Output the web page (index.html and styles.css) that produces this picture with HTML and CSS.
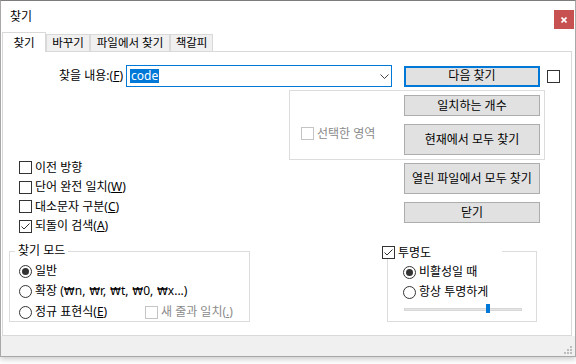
FILE: index.html
```html
<!DOCTYPE html>
<html lang="ko">
<head>
<meta charset="utf-8">
<title>찾기</title>
<link rel="stylesheet" href="styles.css">
</head>
<body>
<div class="window">
  <div class="titlebar">
    <span class="title">찾기</span>
    <span class="close"><svg width="6" height="6" viewBox="0 0 6 6"><path d="M0.5 0.5L5.5 5.5M5.5 0.5L0.5 5.5" stroke="#fff" stroke-width="1.6" fill="none"/></svg></span>
  </div>
  <div class="tabs">
    <div class="tab active w44">찾기</div>
    <div class="tab w44">바꾸기</div>
    <div class="tab w80">파일에서 찾기</div>
    <div class="tab w43">책갈피</div>
  </div>
  <div class="panel">
    <div class="find-row">
      <span class="find-label">찾을 내용:(<u>F</u>)</span>
      <div class="combo">
        <span class="sel">code</span>
        <svg class="chev" width="9" height="5" viewBox="0 0 9 5"><path d="M0.5 0.5L4.5 4.5L8.5 0.5" stroke="#444" fill="none"/></svg>
      </div>
      <span class="btn default">다음 찾기</span>
      <span class="cb find-cb"></span>
    </div>
    <div class="body">
      <div class="left">
        <div class="options">
          <div class="opt"><span class="cb"></span><span>이전 방향</span></div>
          <div class="opt"><span class="cb"></span><span>단어 완전 일치(<u>W</u>)</span></div>
          <div class="opt"><span class="cb"></span><span>대소문자 구분(<u>C</u>)</span></div>
          <div class="opt"><span class="cb checked"><svg width="11" height="11" viewBox="0 0 11 11"><path d="M1.5 5.5L4 8L9.5 2.5" stroke="#333" fill="none"/></svg></span><span>되돌이 검색(<u>A</u>)</span></div>
        </div>
        <div class="group mode">
          <div class="legend">찾기 모드</div>
          <div class="ropt"><span class="rb on"></span><span>일반</span></div>
          <div class="ropt"><span class="rb"></span><span>확장 <span class="esc">(<span class="won">₩</span>n, <span class="won">₩</span>r, <span class="won">₩</span>t, <span class="won">₩</span>0, <span class="won">₩</span>x...)</span></span></div>
          <div class="ropt">
            <span class="ritem"><span class="rb"></span><span>정규 표현식(<u>E</u>)</span></span>
            <span class="ritem dis"><span class="cb"></span><span>새 줄과 일치(<u>.</u>)</span></span>
          </div>
        </div>
      </div>
      <div class="right">
        <div class="sel-group">
          <div class="opt sel-opt dis"><span class="cb"></span><span>선택한 영역</span></div>
          <div class="btn-stack">
            <span class="btn">일치하는 개수</span>
            <span class="btn tall">현재에서 모두 찾기</span>
          </div>
        </div>
        <div class="btn-stack outer">
          <span class="btn tall">열린 파일에서 모두 찾기</span>
          <span class="btn">닫기</span>
        </div>
        <div class="group trans">
          <div class="legend cblegend"><span class="cb checked"><svg width="11" height="11" viewBox="0 0 11 11"><path d="M1.5 5.5L4 8L9.5 2.5" stroke="#333" fill="none"/></svg></span><span>투명도</span></div>
          <div class="ropt"><span class="rb on"></span><span>비활성일 때</span></div>
          <div class="ropt"><span class="rb"></span><span>항상 투명하게</span></div>
          <div class="slider"><span class="track"></span><span class="thumb"></span></div>
        </div>
      </div>
    </div>
  </div>
  <div class="footer">
    <svg width="10" height="9" viewBox="0 0 10 9"><g fill="#bdbdbd"><rect x="6" y="0" width="2" height="2"/><rect x="3" y="3" width="2" height="2"/><rect x="6" y="3" width="2" height="2"/><rect x="0" y="6" width="2" height="2"/><rect x="3" y="6" width="2" height="2"/><rect x="6" y="6" width="2" height="2"/></g></svg>
  </div>
</div>
</body>
</html>
```

FILE: styles.css
```css
* { box-sizing: border-box; margin: 0; padding: 0; }
html, body { width: 576px; height: 364px; overflow: hidden; background: #fff; }
body {
  font-family: "Noto Sans", "Noto Sans CJK KR", sans-serif;
  font-size: 12px;
  line-height: 14px;
  color: #000;
}
u { text-decoration: underline; text-underline-offset: 1px; }
.esc { word-spacing: 0.5px; }
.won {
  display: inline-block;
  width: 11px;
  text-align: center;
  font-family: "DejaVu Sans", sans-serif;
  font-size: 11px;
  word-spacing: 0;
}

.window {
  width: 576px;
  height: 357px;
  border: 1px solid #a8a8a8;
  border-top-color: #7c7c7c;
  background: #fff;
  box-shadow: 0 2px 6px rgba(0, 0, 0, 0.22);
  display: flex;
  flex-direction: column;
}

.titlebar { height: 31px; flex: none; display: flex; align-items: flex-start; }
.title { font-size: 12px; line-height: 14px; margin: 9px 0 0 9px; }
.close {
  margin: 9px 1px 0 auto;
  width: 20px;
  height: 19px;
  background: #c75050;
  display: flex;
  align-items: center;
  justify-content: center;
}

.tabs { height: 19px; flex: none; display: flex; padding-left: 1px; }
.tab {
  height: 17px;
  margin-top: 2px;
  border: 1px solid #d9d9d9;
  border-bottom: 0;
  background: #f0f0f0;
  display: flex;
  align-items: center;
  justify-content: center;
  white-space: nowrap;
  font-size: 11.5px;
}
.tab.active { height: 20px; margin-top: 0; background: #fff; position: relative; z-index: 1; }
.w44 { width: 44px; }
.w80 { width: 80px; }
.w43 { width: 43px; }

.panel {
  flex: none;
  margin-left: 1px;
  width: 570px;
  height: 285px;
  border: 1px solid #d9d9d9;
  background: #fff;
}

.footer {
  flex: 1;
  background: #f0f0f0;
  display: flex;
  justify-content: flex-end;
  align-items: flex-end;
  padding: 0 1px 1px 0;
}

/* find row */
.find-row { display: flex; align-items: center; margin-top: 13px; height: 22px; }
.find-label { width: 120px; margin-right: 3px; text-align: right; white-space: nowrap; }
.combo {
  width: 266px;
  height: 22px;
  border: 1px solid #0078d7;
  display: flex;
  align-items: center;
  padding-left: 3px;
}
.sel { background: #0078d7; color: #fff; height: 14px; line-height: 14px; padding: 0 1px; }
.chev { margin-left: auto; margin-right: 2px; }

.btn {
  width: 136px;
  height: 21px;
  background: #e1e1e1;
  border: 1px solid #adadad;
  display: flex;
  align-items: center;
  justify-content: center;
  flex: none;
  white-space: nowrap;
}
.btn.default { border: 2px solid #0078d7; margin-left: 12px; }
.btn.tall { height: 31px; }
.find-cb { margin-left: 7px; }

/* checkboxes & radios */
.cb {
  width: 13px;
  height: 13px;
  border: 1px solid #333;
  background: #fff;
  flex: none;
  display: inline-flex;
  align-items: center;
  justify-content: center;
}
.rb {
  width: 13px;
  height: 13px;
  border: 1px solid #333;
  border-radius: 50%;
  background: #fff;
  flex: none;
  display: inline-flex;
  align-items: center;
  justify-content: center;
}
.rb.on::after { content: ""; width: 7px; height: 7px; border-radius: 50%; background: #333; }
.dis { color: #8a8a8a; }
.dis .cb { border-color: #c4c4c4; }

.body { display: flex; }
.left { width: 286px; flex: none; }
.options { margin-top: 71px; padding-left: 16px; }
.opt { display: flex; align-items: center; gap: 3px; height: 19.5px; white-space: nowrap; }

.group { position: relative; border: 1px solid #dcdcdc; }
.legend {
  position: absolute;
  top: -8px;
  left: 5px;
  background: #fff;
  padding: 0 3px;
  height: 14px;
  white-space: nowrap;
}
.mode { margin-top: 15px; margin-left: 6px; width: 241px; height: 71px; padding: 9px 0 0 9px; }
.ropt { display: flex; align-items: center; gap: 3px; height: 20.5px; white-space: nowrap; }
.ritem { display: flex; align-items: center; gap: 3px; }
.ritem:first-child { width: 123px; }

.right { display: flex; flex-direction: column; align-items: flex-start; }
.sel-group { margin-top: 3px; width: 256px; height: 70px; border: 1px solid #dcdcdc; display: flex; }
.sel-opt { width: 114px; height: 13px; padding-left: 11px; margin-top: 36px; align-self: flex-start; }
.btn-stack { display: flex; flex-direction: column; gap: 8px; padding-top: 4px; }
.btn-stack.outer { padding-top: 0; margin-top: 3px; margin-left: 115px; }

.trans { margin-top: 28px; margin-left: 98px; width: 150px; height: 71px; padding: 10px 0 0 15px; }
.trans .ropt { height: 20px; }
.cblegend { top: -6px; left: -6px; width: 120px; height: 13px; padding: 0; display: flex; align-items: center; gap: 3px; }
.slider { position: relative; height: 12px; margin-left: 1px; }
.track {
  position: absolute;
  left: 0;
  top: 6px;
  width: 118px;
  height: 3px;
  background: #e7e7e7;
  border: 1px solid #d6d6d6;
}
.thumb {
  position: absolute;
  left: 82px;
  top: 2px;
  width: 4px;
  height: 9px;
  background: #0078d7;
}
```
